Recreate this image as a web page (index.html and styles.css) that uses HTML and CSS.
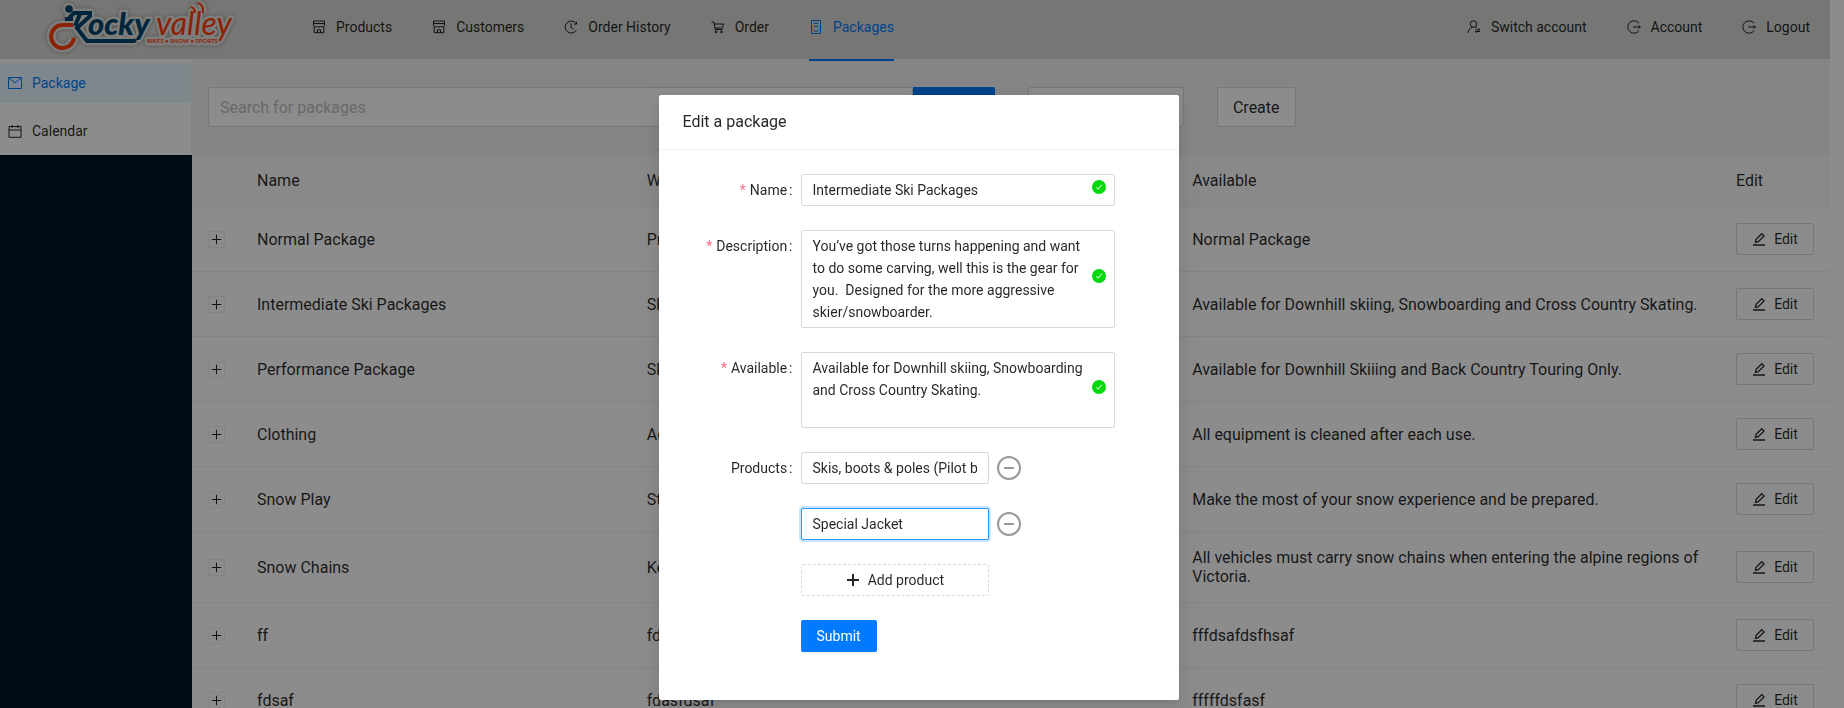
FILE: index.html
```html
<!DOCTYPE html>
<html lang="en">
<head>
<meta charset="utf-8">
<title>Packages - Rocky Valley</title>
<link rel="stylesheet" href="styles.css">
</head>
<body>
<svg class="sprite" aria-hidden="true">
  <symbol id="i-shop" viewBox="0 0 14 14"><path d="M1.500 1h11v4.500a2 2 0 0 1-2 1.500 2 2 0 0 1-1.700-1 2 2 0 0 1-3.600 0A2 2 0 0 1 1.500 5.500zM1.500 3.500h11M2.200 7v5.700h9.600V7M5.500 12.700V9.800h3v2.900"/></symbol>
  <symbol id="i-history" viewBox="0 0 14 14"><path d="M12 3.500A6 6 0 1 0 12.400 10M7 3.500V7.300l2.500 1.800M12.500 1.800v2.400h-2.300"/></symbol>
  <symbol id="i-cart" viewBox="0 0 14 14"><path d="M.5 2h2.300l1.500 7.500h7.200M3.200 4h9.300l-1 4H4"/><circle cx="5" cy="11.800" r="1"/><circle cx="10.500" cy="11.800" r="1"/></symbol>
  <symbol id="i-pack" viewBox="0 0 14 14"><path d="M2.500.5h9v13h-9zM4.500 3.500h5M4.500 6.500h5M4 9.500q1 2 3 2t3-2"/></symbol>
  <symbol id="i-switch" viewBox="0 0 14 14"><circle cx="6.500" cy="4" r="3.200"/><path d="M1 13c0-3 1.800-5 4.500-5.600M8.500 7.300l1.500.5M8.500 9.800h4.500l-1.500-1.300M13 11.500H8.500l1.500 1.300"/></symbol>
  <symbol id="i-logout" viewBox="0 0 14 14"><path d="M12 3.300A6.200 6.200 0 1 0 12 10.700M6 7h7.200M11.600 5.600 13.400 7l-1.800 1.400"/></symbol>
  <symbol id="i-mail" viewBox="0 0 14 14"><path d="M.5 1.500h13v11H.5zM1 2l6 4.800L13 2"/></symbol>
  <symbol id="i-calendar" viewBox="0 0 14 14"><path d="M1 2.500h12v10.800H1zM1 6h12M4.200 1v3M9.800 1v3"/></symbol>
  <symbol id="i-edit" viewBox="0 0 14 14"><path d="M1 13h12M3.500 10.300l.6-2.900L9.800 1.700l2.200 2.200-5.700 5.700z"/></symbol>
  <symbol id="i-plus" viewBox="0 0 14 14"><path d="M7 1v12M1 7h12"/></symbol>
  <symbol id="i-minus" viewBox="0 0 24 24"><circle cx="12" cy="12" r="11"/><path d="M7 12h10"/></symbol>
  <symbol id="i-check" viewBox="0 0 14 14"><circle class="disc" cx="7" cy="7" r="7"/><path class="tick" d="m4.300 7.200 1.900 2.100 3.600-4.700"/></symbol>
</svg>

<div class="app">
  <header class="header">
    <a class="logo" href="#" aria-label="Rocky Valley">
      <svg width="192" height="56" viewBox="0 0 192 56">
        <defs>
          <g id="mark">
            <circle class="navy" cx="21" cy="9" r="3.800"/>
            <path class="navy-line" d="M17 19h8M21 18l5-5h16v3L29 28l10 13h47l2-1M32 14l-5 12"/>
            <path class="red-line" d="M25 25H15a11.500 11.500 0 1 0 11 13"/>
            <text class="navy word bold" x="40" y="35">ocky</text>
            <text class="red word thin" x="108" y="35">valley</text>
            <path class="red-line fine" d="M147 13q0-5-4-6M155 13q1-8-5-10"/>
            <text class="red small" x="99" y="43">BIKES • SNOW • SPORTS</text>
          </g>
        </defs>
        <use href="#mark" class="halo"/>
        <use href="#mark" class="ink"/>
      </svg>
    </a>
    <nav class="nav">
      <a href="#"><svg class="icon"><use href="#i-shop"/></svg>Products</a>
      <a href="#"><svg class="icon"><use href="#i-shop"/></svg>Customers</a>
      <a href="#"><svg class="icon"><use href="#i-history"/></svg>Order History</a>
      <a href="#"><svg class="icon"><use href="#i-cart"/></svg>Order</a>
      <a href="#" class="active"><svg class="icon"><use href="#i-pack"/></svg>Packages</a>
    </nav>
    <nav class="nav account">
      <a href="#"><svg class="icon"><use href="#i-switch"/></svg>Switch account</a>
      <a href="#"><svg class="icon"><use href="#i-logout"/></svg>Account</a>
      <a href="#"><svg class="icon"><use href="#i-logout"/></svg>Logout</a>
    </nav>
  </header>
  <div class="body">
    <aside class="sider">
      <nav class="menu">
        <a href="#" class="selected"><svg class="icon"><use href="#i-mail"/></svg>Package</a>
        <a href="#"><svg class="icon"><use href="#i-calendar"/></svg>Calendar</a>
      </nav>
    </aside>
    <main class="main">
      <div class="toolbar">
        <div class="search">
          <input type="text" placeholder="Search for packages" aria-label="Search for packages">
          <button type="button">Search</button>
        </div>
        <input class="filter" type="text" aria-label="Filter">
        <button class="create" type="button">Create</button>
      </div>
      <table class="table">
        <colgroup><col class="c-expand"><col><col class="c-what"><col class="c-avail"><col class="c-edit"></colgroup>
        <thead><tr><th></th><th>Name</th><th>What</th><th>Available</th><th>Edit</th></tr></thead>
        <tbody>
          <tr><td><button class="expand" aria-label="Expand"><svg><use href="#i-plus"/></svg></button></td><td>Normal Package</td><td>Pr</td><td>Normal Package</td><td><button class="edit"><svg class="icon"><use href="#i-edit"/></svg>Edit</button></td></tr>
          <tr><td><button class="expand" aria-label="Expand"><svg><use href="#i-plus"/></svg></button></td><td>Intermediate Ski Packages</td><td>Sk</td><td>Available for Downhill skiing, Snowboarding and Cross Country Skating.</td><td><button class="edit"><svg class="icon"><use href="#i-edit"/></svg>Edit</button></td></tr>
          <tr><td><button class="expand" aria-label="Expand"><svg><use href="#i-plus"/></svg></button></td><td>Performance Package</td><td>Sk</td><td>Available for Downhill Skiiing and Back Country Touring Only.</td><td><button class="edit"><svg class="icon"><use href="#i-edit"/></svg>Edit</button></td></tr>
          <tr><td><button class="expand" aria-label="Expand"><svg><use href="#i-plus"/></svg></button></td><td>Clothing</td><td>Ad</td><td>All equipment is cleaned after each use.</td><td><button class="edit"><svg class="icon"><use href="#i-edit"/></svg>Edit</button></td></tr>
          <tr><td><button class="expand" aria-label="Expand"><svg><use href="#i-plus"/></svg></button></td><td>Snow Play</td><td>St</td><td>Make the most of your snow experience and be prepared.</td><td><button class="edit"><svg class="icon"><use href="#i-edit"/></svg>Edit</button></td></tr>
          <tr><td><button class="expand" aria-label="Expand"><svg><use href="#i-plus"/></svg></button></td><td>Snow Chains</td><td>Ke</td><td>All vehicles must carry snow chains when entering the alpine regions of Victoria.</td><td><button class="edit"><svg class="icon"><use href="#i-edit"/></svg>Edit</button></td></tr>
          <tr><td><button class="expand" aria-label="Expand"><svg><use href="#i-plus"/></svg></button></td><td>ff</td><td>fd</td><td>fffdsafdsfhsaf</td><td><button class="edit"><svg class="icon"><use href="#i-edit"/></svg>Edit</button></td></tr>
          <tr><td><button class="expand" aria-label="Expand"><svg><use href="#i-plus"/></svg></button></td><td>fdsaf</td><td>fdasfdsaf</td><td>fffffdsfasf</td><td><button class="edit"><svg class="icon"><use href="#i-edit"/></svg>Edit</button></td></tr>
        </tbody>
      </table>
    </main>
  </div>
</div>

<div class="mask">
  <section class="modal" role="dialog" aria-labelledby="modal-title">
    <h2 class="modal-title" id="modal-title">Edit a package</h2>
    <form class="form">
      <div class="row">
        <label class="required" for="name">Name</label>
        <div class="field"><input class="control" id="name" type="text" value="Intermediate Ski Packages"><svg class="valid"><use href="#i-check"/></svg></div>
      </div>
      <div class="row">
        <label class="required" for="description">Description</label>
        <div class="field middle"><textarea class="control" id="description" rows="4">You’ve got those turns happening and want to do some carving, well this is the gear for you.  Designed for the more aggressive skier/snowboarder.</textarea><svg class="valid"><use href="#i-check"/></svg></div>
      </div>
      <div class="row">
        <label class="required" for="available">Available</label>
        <div class="field middle"><textarea class="control" id="available" rows="3">Available for Downhill skiing, Snowboarding and Cross Country Skating.</textarea><svg class="valid"><use href="#i-check"/></svg></div>
      </div>
      <div class="row">
        <label for="product-1">Products</label>
        <div class="field product"><input class="control" id="product-1" type="text" value="Skis, boots &amp; poles (Pilot boots)"><button class="remove" type="button" aria-label="Remove product"><svg><use href="#i-minus"/></svg></button></div>
      </div>
      <div class="row">
        <div class="field product"><input class="control focused" aria-label="Product 2" type="text" value="Special Jacket"><button class="remove" type="button" aria-label="Remove product"><svg><use href="#i-minus"/></svg></button></div>
      </div>
      <div class="row">
        <div class="field"><button class="add" type="button"><svg class="icon"><use href="#i-plus"/></svg>Add product</button></div>
      </div>
      <div class="row">
        <div class="field"><button class="submit" type="button">Submit</button></div>
      </div>
    </form>
  </section>
</div>
</body>
</html>
```
FILE: styles.css
```css
* { box-sizing: border-box; }
html { overflow: hidden; }
body {
  margin: 0;
  height: 100vh;
  overflow: hidden;
  background: #fff;
  color: rgba(0, 0, 0, 0.85);
  font-family: Roboto, "Liberation Sans", sans-serif;
  font-size: 14px;
}
a { color: inherit; text-decoration: none; }
button, input, textarea { font: inherit; color: inherit; }
.sprite { position: absolute; width: 0; height: 0; }
svg { fill: none; stroke: currentColor; display: block; }
.icon { width: 14px; height: 14px; flex: none; }

.app { display: flex; flex-direction: column; height: 100vh; margin-right: 14px; }
.header { position: relative; z-index: 1; display: flex; height: 59px; flex: none; background: #d8d8d4; }
.logo { margin: 0 72px 0 48px; flex: none; }
.logo svg { stroke: none; overflow: visible; }
.navy { fill: var(--navy); }
.red { fill: var(--red); }
.navy-line { fill: none; stroke: var(--navy); stroke-width: var(--line); }
.red-line { fill: none; stroke: var(--red); stroke-width: var(--line); }
.fine { stroke-width: var(--fine); }
.word { font-family: Lato, sans-serif; font-style: italic; }
.bold { font-size: 31px; font-weight: 900; }
.thin { font-size: 32px; font-weight: 400; }
.small { font-family: Lato, sans-serif; font-size: 6px; font-weight: 700; }
.ink { --navy: #00466f; --red: #ff3c08; --line: 4; --fine: 2; }
.halo {
  --navy: #e4e4e1;
  --red: #e4e4e1;
  --line: 9;
  --fine: 7;
  stroke: #e4e4e1;
  stroke-width: 5;
  stroke-linejoin: round;
  filter: drop-shadow(0 0 2px rgba(0, 0, 0, 0.3));
}

.nav { display: flex; gap: 40px; height: 61px; }
.nav a { display: flex; align-items: center; gap: 10px; padding-bottom: 6px; border-bottom: 2px solid transparent; white-space: nowrap; }
.nav .active { color: #007bff; border-color: #007bff; }
.account { margin-left: auto; padding-right: 20px; }

.body { display: flex; flex: 1; min-height: 0; }
.sider { width: 192px; flex: none; background: #001529; }
.menu { display: flex; flex-direction: column; gap: 8px; padding: 4px 0; background: #fff; border-right: 1px solid #f0f0f0; }
.menu a { display: flex; align-items: center; gap: 10px; height: 40px; padding-left: 8px; }
.menu .selected { background: #e6f7ff; color: #007bff; }

.main { flex: 1; min-width: 0; overflow: hidden; }
.toolbar { display: flex; gap: 33px; padding: 28px 16px; background: #f0f2f5; font-size: 16px; }
.search { display: flex; width: 49%; }
.toolbar input { height: 40px; min-width: 0; padding: 0 11px; border: 1px solid #d9d9d9; border-radius: 2px; background: #fff; }
.toolbar input::placeholder { color: #bfbfbf; }
.search input { flex: 1; }
.search button { width: 82px; height: 40px; border: 0; border-radius: 0 2px 2px 0; background: #007bff; color: #fff; }
.filter { width: 156px; }
.create { height: 40px; padding: 0 15px; border: 1px solid #d9d9d9; border-radius: 2px; background: #fff; }

.table { width: 100%; table-layout: fixed; border-collapse: separate; border-spacing: 0; background: #fff; font-size: 16px; line-height: normal; }
.c-expand { width: 49px; }
.c-what { width: 33.3%; }
.c-avail { width: 33.2%; }
.c-edit { width: 110px; }
.table th, .table td { padding: 16px; border-bottom: 1px solid #f0f0f0; text-align: left; font-weight: 400; }
.table th { background: #fafafa; }
.expand { display: flex; align-items: center; justify-content: center; width: 17px; height: 17px; padding: 0; border: 1px solid #f0f0f0; border-radius: 2px; background: #fff; }
.expand svg { width: 11px; height: 11px; stroke-width: 1.3; }
.edit { display: flex; align-items: center; justify-content: center; gap: 8px; width: 78px; height: 32px; padding: 0; border: 1px solid #d9d9d9; border-radius: 2px; background: #fff; font-size: 14px; }
.edit .icon { stroke-width: 1.3; }

.mask { position: fixed; inset: 0; z-index: 2; display: flex; justify-content: center; align-items: flex-start; padding-top: 95px; padding-right: 7px; background: rgba(0, 0, 0, 0.45); }
.modal { width: 520px; border-radius: 2px; background: #fff; box-shadow: 0 3px 6px -4px rgba(0, 0, 0, 0.12), 0 6px 16px rgba(0, 0, 0, 0.08), 0 9px 28px 8px rgba(0, 0, 0, 0.05); }
.modal-title { margin: 0; padding: 16px 24px; border-bottom: 1px solid #f0f0f0; font-size: 16px; line-height: 22px; font-weight: 400; }
.form { padding: 24px; line-height: 22px; }
.row { display: grid; grid-template-columns: 3fr 8fr 1fr; margin-bottom: 24px; }
.row label { height: 32px; padding-right: 8px; text-align: right; line-height: 32px; }
.row label::after { content: ":"; margin-left: 2px; }
.row .required::before { content: "*"; margin-right: 4px; color: #ff6b81; }
.field { position: relative; grid-column: 2; }
.control { display: block; width: 100%; padding: 4px 30px 4px 11px; border: 1px solid #d9d9d9; border-radius: 2px; background: #fff; line-height: 22px; resize: none; outline: 0; }
.valid { position: absolute; right: 9px; top: 6px; width: 14px; height: 14px; }
.middle .valid { top: 50%; margin-top: -10px; }
.disc { fill: #00d90e; stroke: none; }
.tick { stroke: #fff; }
.product { display: flex; align-items: center; gap: 8px; }
.product .control { width: 60%; padding-right: 11px; }
.product .focused { border-color: #1f9bff; box-shadow: 0 0 0 2px rgba(0, 123, 255, 0.2); }
.remove { padding: 0; border: 0; background: none; color: #999; }
.remove svg { width: 24px; height: 24px; stroke-width: 2; }
.add { display: flex; align-items: center; justify-content: center; gap: 8px; width: 60%; height: 32px; border: 1px dashed #d9d9d9; border-radius: 2px; background: #fff; }
.add .icon { stroke-width: 2; }
.submit { display: block; height: 32px; padding: 0 16px; border: 0; border-radius: 2px; background: #007bff; color: #fff; box-shadow: 0 2px 0 rgba(0, 0, 0, 0.04); }
```
